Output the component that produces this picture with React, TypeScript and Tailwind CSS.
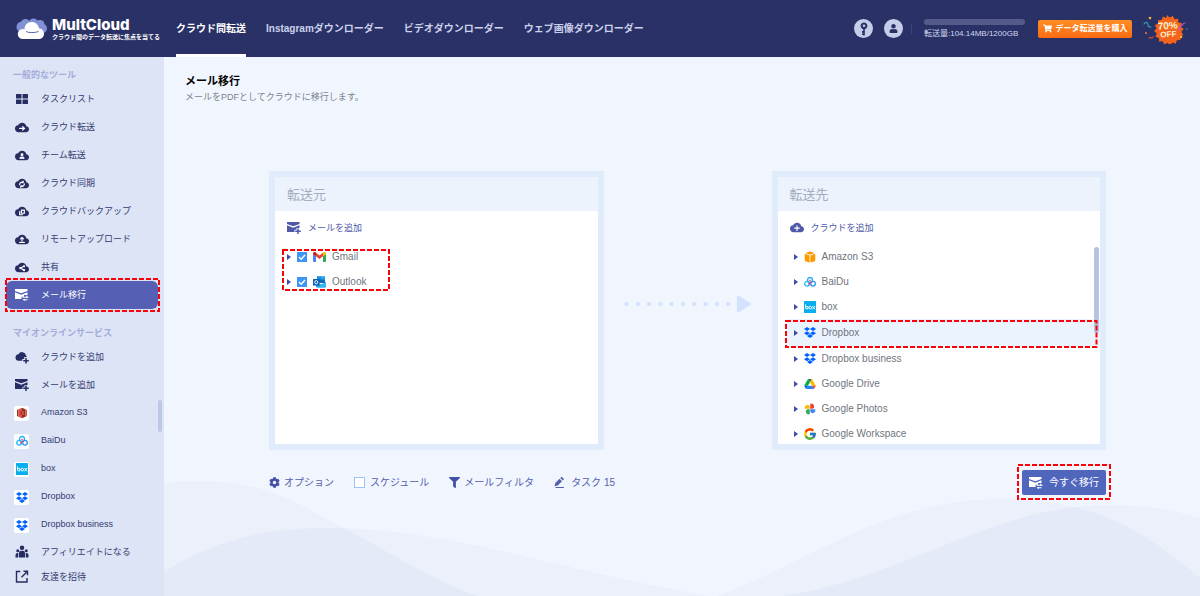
import type { ReactNode } from "react";
import clsx from "clsx";
import { FaCog, FaFilter, FaShoppingCart, FaUser } from "react-icons/fa";
import { FcGoogle } from "react-icons/fc";

const CLOUD_PATH =
    "M19.35 10.04A7.49 7.49 0 0 0 12 4C9.11 4 6.6 5.64 5.35 8.04A5.994 5.994 0 0 0 0 14c0 3.31 2.69 6 6 6h13c2.76 0 5-2.24 5-5 0-2.64-2.05-4.78-4.65-4.96z";

function CloudIcon({ children }: { children?: ReactNode }) {
    return (
        <svg viewBox="0 3 24 18" className="h-[11px] w-3.5" aria-hidden="true">
            <path d={CLOUD_PATH} fill="currentColor" />
            <g fill="none" stroke="#fff" strokeWidth="2" strokeLinecap="round" strokeLinejoin="round">
                {children}
            </g>
        </svg>
    );
}

function CloudPlusIcon() {
    return (
        <svg viewBox="0 0 28 26" className="h-[13px] w-3.5" aria-hidden="true">
            <path
                d="M22 9A8 8 0 0 0 7 6.600 6.500 6.500 0 0 0 6.500 19.500h8v-3.500h4v-4H24z"
                fill="currentColor"
            />
            <path d="M22 14v11M16.500 19.500h11" stroke="currentColor" strokeWidth="3" />
        </svg>
    );
}

function MailPlusIcon() {
    return (
        <svg viewBox="0 0 28 24" className="h-3 w-3.5" aria-hidden="true">
            <path d="M0 0h25v4L12.500 8.500 0 4z" fill="currentColor" />
            <path d="M0 6.500l12.500 5 12.500-5V12h-6v3.500h-4V20H0z" fill="currentColor" />
            <path d="M22 13v11M16.500 18.500h11" stroke="currentColor" strokeWidth="3" />
        </svg>
    );
}

function MailMoveIcon() {
    return (
        <svg viewBox="0 0 28 24" className="h-3 w-3.5" aria-hidden="true">
            <path d="M0 0h25v4L12.500 8.500 0 4z" fill="currentColor" />
            <path d="M0 6.500l12.500 5 12.500-5V12h-7v3.500h-5V20H0z" fill="currentColor" />
            <path d="M15 16.500h9M17 21.500h8" stroke="currentColor" strokeWidth="2.200" />
            <path d="M22.500 12.500l5.500 5h-5.500zM19.500 24.500v-4H15z" fill="currentColor" />
        </svg>
    );
}

function TeamIcon() {
    return (
        <svg viewBox="0 0 28 26" className="h-[13px] w-3.5" fill="currentColor" aria-hidden="true">
            <circle cx="14" cy="5.500" r="4.500" />
            <circle cx="5.500" cy="11.500" r="3" />
            <circle cx="22.500" cy="11.500" r="3" />
            <path d="M8 25V16a4.500 4.500 0 0 1 4.500-4.500h3A4.500 4.500 0 0 1 20 16v9z" />
            <path d="M1 25v-5a4 4 0 0 1 4-4h1.500v9zM27 25v-5a4 4 0 0 0-4-4h-1.500v9z" />
        </svg>
    );
}

function InviteIcon() {
    return (
        <svg viewBox="0 0 26 26" className="h-[13px] w-3.5" fill="none" stroke="currentColor" strokeWidth="2.800" aria-hidden="true">
            <path d="M9.500 3H2v21h21v-8" />
            <path d="M16 2.500h8v8M24 2.500l-12 12" />
        </svg>
    );
}

function GridIcon() {
    return (
        <svg viewBox="0 0 24 20" className="h-2.5 w-3" fill="currentColor" aria-hidden="true">
            <rect width="11" height="9" rx="1" />
            <rect x="13" width="11" height="9" rx="1" />
            <rect y="11" width="11" height="9" rx="1" />
            <rect x="13" y="11" width="11" height="9" rx="1" />
        </svg>
    );
}

function PencilIcon() {
    return (
        <svg viewBox="0 0 22 22" className="size-[11px]" fill="currentColor" aria-hidden="true">
            <path d="M1 18.500l1.500-6.500L11 3.500l5 5-8.500 8.500zM12.500 2l1.500-1.300c.8-.7 1.700-.7 2.500 0L19 3.200c.8.800.8 1.700 0 2.500L17.500 7z" />
            <path d="M3 20h17v2H3z" />
        </svg>
    );
}

function S3RedLogo() {
    return (
        <svg viewBox="0 0 24 24" className="size-3" aria-hidden="true">
            <path d="M2 6l3-1.500v15L2 18z" fill="#8c3123" />
            <path d="M5 4.500l7-3v21l-7-3z" fill="#e05243" />
            <path d="M19 4.500l-7-3v21l7-3z" fill="#8c3123" />
            <path d="M22 6l-3-1.500v15l3-1.500z" fill="#e05243" />
            <path d="M8.500 8l3.500 1v6l-3.500 1z" fill="#b0392c" />
            <path d="M15.500 8L12 9v6l3.500 1z" fill="#e05243" />
        </svg>
    );
}

function S3BoxLogo() {
    return (
        <svg viewBox="0 0 24 24" className="size-3" aria-hidden="true">
            <path d="M12 1l9.500 3L12 7.500 2.500 4z" fill="#ff9900" />
            <path d="M1.500 5.500L11.200 9v14L4 21c-1.700-.6-2.500-1.500-2.500-3zM22.500 5.500L12.800 9v14L20 21c1.700-.6 2.500-1.500 2.500-3z" fill="#ff9900" />
        </svg>
    );
}

function BaiduLogo() {
    return (
        <svg viewBox="0 0 24 24" className="size-3" fill="none" strokeWidth="2.600" aria-hidden="true">
            <circle cx="12" cy="8" r="5" stroke="#2ab0fb" />
            <circle cx="6" cy="15.500" r="4.600" stroke="#19b5fe" />
            <circle cx="18" cy="15.500" r="4.600" stroke="#2196f3" />
            <path d="M9 17l5.500-5.500" stroke="#f5405a" />
            <circle cx="12" cy="9" r="1.600" fill="#f5405a" />
        </svg>
    );
}

function BoxLogo() {
    return (
        <svg viewBox="0 0 24 24" className="size-3" aria-hidden="true">
            <rect width="24" height="24" rx="1" fill="#06aeef" />
            <g fill="none" stroke="#fff" strokeWidth="1.900" strokeLinecap="round">
                <path d="M3 7.500v6" />
                <circle cx="5.800" cy="13.300" r="2.700" />
                <circle cx="12.500" cy="13.300" r="2.700" />
                <path d="M17.500 10.600l4 5.400M21.500 10.600l-4 5.400" />
            </g>
        </svg>
    );
}

function DropboxLogo() {
    return (
        <svg viewBox="0 0 24 22" className="h-[11px] w-3" fill="#0061ff" aria-hidden="true">
            <path d="M6 0l6 4-6 4-6-4zM18 0l6 4-6 4-6-4zM6 8.500l6 4-6 4-6-4zM18 8.500l6 4-6 4-6-4z" />
            <path d="M6 18l6-4 6 4-6 4z" />
        </svg>
    );
}

function DriveLogo() {
    return (
        <svg viewBox="0 0 24 22" className="size-3" aria-hidden="true">
            <path d="M8.200 1h7.600L12 7.700z" fill="#188038" />
            <path d="M8.200 1L12 7.700 7.800 14.500H.3z" fill="#00ac47" />
            <path d="M15.800 1L12 7.700l4.200 6.800h7.500z" fill="#ffba00" />
            <path d="M7.800 14.500h8.400l3.800 6.500H4z" fill="#2684fc" />
            <path d="M.3 14.500h7.500L4 21z" fill="#0066da" />
            <path d="M23.700 14.500h-7.500L20 21z" fill="#ea4335" />
        </svg>
    );
}

function PhotosLogo() {
    return (
        <svg viewBox="0 0 24 24" className="size-3" aria-hidden="true">
            <path d="M12.500 2v9.500h4.700A4.700 4.700 0 0 0 12.500 2z" fill="#ea4335" />
            <path d="M22 12.500h-9.500v4.700a4.700 4.700 0 0 0 9.500-4.700z" fill="#4285f4" />
            <path d="M11.500 22v-9.500H6.800a4.700 4.700 0 0 0 4.700 9.500z" fill="#34a853" />
            <path d="M2 11.500h9.500V6.800A4.700 4.700 0 0 0 2 11.500z" fill="#fbbc04" />
        </svg>
    );
}

function GmailLogo() {
    return (
        <svg viewBox="0 0 26 20" className="h-2.5 w-[13px]" aria-hidden="true">
            <path d="M0 4l6 4v12H2a2 2 0 0 1-2-2z" fill="#4285f4" />
            <path d="M26 4l-6 4v12h4a2 2 0 0 0 2-2z" fill="#34a853" />
            <path d="M6 1.500l7 5.500 7-5.500V8.500L13 14 6 8.500z" fill="#ea4335" />
            <path d="M0 3c0-2.500 3-4 5-2.300l1 .8v7L0 4.500z" fill="#c5221f" />
            <path d="M26 3c0-2.500-3-4-5-2.300l-1 .8v7l6-4z" fill="#fbbc04" />
        </svg>
    );
}

function OutlookLogo() {
    return (
        <svg viewBox="0 0 26 24" className="h-3 w-[13px]" aria-hidden="true">
            <path d="M8 1h16v13H8z" fill="#0f6cbd" />
            <path d="M8 1h8v6H8z" fill="#1490df" />
            <path d="M16 1h8v6h-8z" fill="#28a8ea" />
            <path d="M6 12l10 5 10-5v9a2 2 0 0 1-2 2H8a2 2 0 0 1-2-2z" fill="#1aa0e8" />
            <path d="M26 12v9a2 2 0 0 1-2 2H9z" fill="#35b8f1" />
            <rect y="6" width="13" height="13" rx="1" fill="#0a5eb0" />
            <ellipse cx="6.500" cy="12.500" rx="3" ry="3.300" fill="none" stroke="#fff" strokeWidth="2" />
        </svg>
    );
}

// Red dashed frame around the nearest relative parent
function Highlight({ className }: { className: string }) {
    return (
        <svg className={clsx("pointer-events-none absolute z-10 overflow-visible", className)} aria-hidden="true">
            <rect width="100%" height="100%" fill="none" stroke="#fb0007" strokeWidth="2" strokeDasharray="5 2" />
        </svg>
    );
}

function Caret() {
    return (
        <button type="button" aria-label="展開" className="flex w-2.5 shrink-0 items-center">
            <svg viewBox="0 0 4 6" className="h-1.5 w-1 fill-[#3f4aa8]">
                <path d="M0 0l4 3-4 3z" />
            </svg>
        </button>
    );
}

const tools = [
    { label: "タスクリスト", icon: <GridIcon /> },
    { label: "クラウド転送", icon: <CloudIcon><path d="M8 13.500h8M13 10.500l3.500 3-3.500 3" /></CloudIcon> },
    {
        label: "チーム転送",
        icon: <CloudIcon><circle cx="12" cy="10.500" r="1.500" fill="#fff" /><path d="M8.500 16.500c1-2.500 6-2.500 7 0z" fill="#fff" /></CloudIcon>,
    },
    { label: "クラウド同期", icon: <CloudIcon><path d="M8 14a4 4 0 0 1 6-4M16 12.500a4 4 0 0 1-6 4M14 8v2.500h-2M10 18.500V16h2" /></CloudIcon> },
    { label: "クラウドバックアップ", icon: <CloudIcon><path d="M8 12v5.500h5M11 9.500h5V15h-5z" /></CloudIcon> },
    { label: "リモートアップロード", icon: <CloudIcon><path d="M12 14V9M9.500 11L12 8.500l2.500 2.500M8 17h8" /></CloudIcon> },
    { label: "共有", icon: <CloudIcon><path d="M15.500 10L9 13l6.500 3.500" /><circle cx="15.500" cy="10" r=".8" /><circle cx="9" cy="13" r=".8" /><circle cx="15.500" cy="16.500" r=".8" /></CloudIcon> },
    { label: "メール移行", icon: <MailMoveIcon />, active: true },
];

const services = [
    { label: "Amazon S3", icon: <S3RedLogo /> },
    { label: "BaiDu", icon: <BaiduLogo /> },
    { label: "box", icon: <BoxLogo /> },
    { label: "Dropbox", icon: <DropboxLogo /> },
    { label: "Dropbox business", icon: <DropboxLogo /> },
];

const targets = [
    { label: "Amazon S3", icon: <S3BoxLogo /> },
    { label: "BaiDu", icon: <BaiduLogo /> },
    { label: "box", icon: <BoxLogo /> },
    { label: "Dropbox", icon: <DropboxLogo />, selected: true },
    { label: "Dropbox business", icon: <DropboxLogo /> },
    { label: "Google Drive", icon: <DriveLogo /> },
    { label: "Google Photos", icon: <PhotosLogo /> },
    { label: "Google Workspace", icon: <FcGoogle className="size-3.5 shrink-0" aria-hidden="true" /> },
];

const sources = [
    { label: "Gmail", icon: <GmailLogo /> },
    { label: "Outlook", icon: <OutlookLogo /> },
];

function SideLink({ label, icon, active, tile, short }: { label: string; icon: ReactNode; active?: boolean; tile?: boolean; short?: boolean }) {
    return (
        <li className="relative">
            <a
                href="#"
                className={clsx(
                    "mx-1.5 flex items-center gap-3 rounded-md pl-2",
                    short ? "h-[25px]" : "h-7",
                    active ? "bg-[#5560b4] text-white" : "text-[#343b70]"
                )}
            >
                <span className={clsx("flex size-[15px] shrink-0 items-center justify-center", tile ? "rounded-xs bg-white" : !active && "text-[#262d62]")}>
                    {icon}
                </span>
                <span className={clsx(!tile && "pt-0.5")}>{label}</span>
            </a>
            {active && <Highlight className="-top-0.5 left-1.5 h-8 w-[153px]" />}
        </li>
    );
}

function Header() {
    return (
        <header className="flex h-[57px] shrink-0 items-center bg-[#2a3166] text-[10px] font-bold text-[#ccd2ec]">
            <a href="#" className="flex w-44 shrink-0 items-center gap-1 pl-4 whitespace-nowrap text-white">
                <svg viewBox="0 0 64 44" className="h-[22px] w-8 shrink-0" aria-hidden="true">
                    <g fill="#8291d6">
                        <circle cx="12" cy="18" r="11" />
                        <circle cx="19" cy="11" r="9" />
                        <circle cx="35" cy="11" r="10" />
                        <circle cx="48" cy="13" r="9" />
                        <circle cx="53" cy="21" r="9" />
                    </g>
                    <path
                        d="M14 42a10 10 0 0 1-1-20c2 0 3 0 4 1 0-9 6-15 14-15s14 5 15 13c6 0 10 5 10 10.500S52 42 46 42z"
                        fill="#fff"
                    />
                    <path d="M20 27c5 3 18 3 25 0" fill="none" stroke="#5966ab" strokeWidth="2" />
                </svg>
                <span className="flex flex-col">
                    <span className="font-['Inter',sans-serif] text-[15px] leading-4 font-extrabold">MultCloud</span>
                    <span className="text-[6px] leading-2">クラウド間のデータ転送に焦点を当てる</span>
                </span>
            </a>
            <nav className="flex h-full gap-5 whitespace-nowrap">
                <a href="#" className="flex items-center border-y-3 border-t-transparent border-b-white text-white">クラウド間転送</a>
                <a href="#" className="flex items-center">Instagramダウンローダー</a>
                <a href="#" className="flex items-center">ビデオダウンローダー</a>
                <a href="#" className="flex items-center">ウェブ画像ダウンローダー</a>
            </nav>
            <div className="ml-auto flex items-center pr-3 font-normal whitespace-nowrap">
                <button type="button" aria-label="キー" className="flex size-[19px] items-center justify-center rounded-full bg-[#c5cde8] text-[#2a3166]">
                    <svg viewBox="0 0 16 24" className="h-3.5 w-2.5" fill="none" stroke="currentColor" aria-hidden="true">
                        <circle cx="8" cy="6.500" r="4" strokeWidth="3.600" />
                        <path d="M8 10v13M8 17h-3.500M8 21h-3.500" strokeWidth="2.800" />
                    </svg>
                </button>
                <button type="button" aria-label="アカウント" className="ml-[11px] flex size-[19px] items-center justify-center rounded-full bg-[#c5cde8] text-[#2a3166]">
                    <FaUser className="size-[9px]" />
                </button>
                <span className="mr-3 ml-2 h-2.5 w-px bg-[#3d4479]" />
                <div className="w-[101px]">
                    <div className="h-1.5 rounded-full bg-[#555b88]" />
                    <p className="mt-1 h-2.5 text-[8px] leading-2.5 text-[#d3d9ef]">転送量:104.14MB/1200GB</p>
                </div>
                <button
                    type="button"
                    className="ml-[13px] flex h-[18px] w-[94px] items-center justify-center gap-1 rounded-xs bg-linear-to-b from-[#ff8d24] to-[#fa6a12] text-[8px] font-bold text-white"
                >
                    <FaShoppingCart className="size-[9px]" aria-hidden="true" />
                    データ転送量を購入
                </button>
                <a href="#" className="ml-2.5" aria-label="70% OFF">
                    <svg viewBox="0 0 46 30" className="h-[30px] w-[46px]">
                        <path
                            d="M25 1l2.600 2.600L31 2l1.500 3.300 3.600-.6.200 3.700 3.600.9-1.200 3.400 3 2.300-2.400 2.700 1.900 3.200-3.300 1.500.5 3.600-3.600.2-1 3.600-3.500-1.300-2.300 2.900-2.600-2.600-3.200 1.800-1.400-3.400-3.700.4-.1-3.700-3.500-1.100 1.400-3.400-2.800-2.400 2.500-2.600-1.700-3.300 3.400-1.300-.3-3.600 3.600-.1 1.200-3.500 3.400 1.500z"
                            fill="#f5641b"
                        />
                        <g fill="none" strokeWidth="1.200" strokeLinecap="round">
                            <path d="M2 10c2-3 4-1 4 1s2 2 3 2" stroke="#2f9ab5" />
                            <path d="M43 9c-3 0-2 3-4 3s-1 4-3 4" stroke="#c055c8" />
                            <path d="M7 24c1-1 2 1 4-1" stroke="#e04b2d" />
                        </g>
                        <circle cx="8" cy="4" r="1.300" fill="#ffb02e" />
                        <circle cx="4" cy="19" r="1" fill="#ef7a28" />
                        <circle cx="39" cy="23" r="1.300" fill="#ffb02e" />
                        <circle cx="45" cy="15" r=".8" fill="#2f9ab5" />
                        <g fill="#fff4cf" textAnchor="middle" className="font-bold" transform="rotate(-4 26 15)">
                            <text x="26" y="15" className="text-[10px]">70%</text>
                            <text x="26" y="23" className="text-[8px]">OFF</text>
                        </g>
                    </svg>
                </a>
            </div>
        </header>
    );
}

function Sidebar() {
    return (
        <aside className="relative w-[164px] shrink-0 bg-[#dde4f6] pt-2 text-[9px] whitespace-nowrap">
            <h2 className="flex h-5 items-center pt-0.5 pl-[13px] font-bold text-[#a4acd8]">一般的なツール</h2>
            <ul>
                {tools.map((item) => <SideLink key={item.label} {...item} />)}
            </ul>
            <h2 className="mt-3.5 flex h-5 items-center pt-0.5 pl-[13px] font-bold text-[#a4acd8]">マイオンラインサービス</h2>
            <ul>
                <SideLink label="クラウドを追加" icon={<CloudPlusIcon />} />
                <SideLink label="メールを追加" icon={<MailPlusIcon />} />
                {services.map((item) => <SideLink key={item.label} {...item} tile />)}
            </ul>
            <ul>
                <SideLink label="アフィリエイトになる" icon={<TeamIcon />} short />
                <SideLink label="友達を招待" icon={<InviteIcon />} short />
            </ul>
            <div className="absolute top-[343px] right-0.5 h-8 w-1 rounded-full bg-[#bdc8e4]" />
        </aside>
    );
}

function Panel({ title, children }: { title: string; children: ReactNode }) {
    return (
        <section className="min-w-0 flex-1 border-6 border-[#e0ebfb] bg-white">
            <h2 className="flex h-[34px] items-center bg-[#ecf3fc] pt-0.5 pl-3 text-[13px] text-[#a3adc0]">{title}</h2>
            <div className="relative h-[233px] overflow-hidden text-[10px] text-[#6f757e]">{children}</div>
        </section>
    );
}

function Waves() {
    return (
        <svg viewBox="0 0 1036 116" preserveAspectRatio="none" className="absolute bottom-0 left-0 h-[116px] w-full fill-[#6070b8]/4" aria-hidden="true">
            <path d="M0 3C90-8 130 22 178 47 230 74 270 102 314 116H0z" />
            <path d="M0 92C50 60 100 48 162 48 290 48 390 90 546 116H0z" />
            <path d="M553 116C650 80 720 19 838 19 930 19 980 50 1036 98V116z" />
            <path d="M619 116C740 98 830 25 944 25c40 0 65 5 92 13v78z" />
        </svg>
    );
}

export default function App() {
    return (
        <div className="flex min-h-screen flex-col font-['Liberation_Sans','Noto_Sans_CJK_JP',sans-serif]" lang="ja">
            <Header />
            <div className="flex flex-1">
                <Sidebar />
                <main className="relative flex-1 bg-[#f1f6fe]">
                    <Waves />
                    <div className="relative pt-4 pl-[21px]">
                        <h1 className="text-[11px] leading-4 font-bold text-black">メール移行</h1>
                        <p className="text-[9px] leading-4 text-[#7b828c]">メールをPDFとしてクラウドに移行します。</p>
                    </div>
                    <div className="relative mt-[66px] pr-[94px] pl-[105px]">
                        <div className="flex items-center">
                            <Panel title="転送元">
                                <button type="button" className="flex h-[33px] items-center gap-[7px] pl-3 text-[9px] text-[#4f59a8]">
                                    <MailPlusIcon />
                                    <span className="pt-0.5">メールを追加</span>
                                </button>
                                <ul className="relative w-[115px]">
                                    {sources.map((item) => (
                                        <li key={item.label} className="flex h-[25px] items-center pl-3">
                                            <Caret />
                                            <label className="flex items-center">
                                                <span className="relative mr-1.5 size-2.5">
                                                    <input type="checkbox" defaultChecked className="peer block size-2.5 appearance-none border border-[#3b96f5] checked:bg-[#3b96f5]" />
                                                    <svg viewBox="0 0 10 10" className="pointer-events-none absolute inset-0 hidden peer-checked:block" fill="none" stroke="#fff" strokeWidth="1.500">
                                                        <path d="M2 5l2.200 2.200L8 3" />
                                                    </svg>
                                                </span>
                                                {item.icon}
                                                <span className="ml-1.5">{item.label}</span>
                                            </label>
                                        </li>
                                    ))}
                                    <Highlight className="top-1.5 left-2 h-10 w-[106px]" />
                                </ul>
                            </Panel>
                            <svg viewBox="0 0 128 18" className="mx-5 mb-3.5 h-[18px] w-32 shrink-0 fill-[#d4e2fd]" aria-hidden="true">
                                {[0, 1, 2, 3, 4, 5, 6, 7, 8, 9].map((i) => <circle key={i} cx={2.500 + i * 11.300} cy="9" r="2.200" />)}
                                <path d="M113 1.500c0-1 1-1.300 1.800-.8l11.700 7.200c.8.500.8 1.700 0 2.200l-11.700 7.200c-.8.500-1.800.2-1.800-.8z" />
                            </svg>
                            <Panel title="転送先">
                                <button type="button" className="flex h-[33px] items-center gap-[7px] pl-3 text-[9px] text-[#4f59a8]">
                                    <CloudIcon><path d="M12 9v8M8 13h8" /></CloudIcon>
                                    <span className="pt-0.5">クラウドを追加</span>
                                </button>
                                <ul>
                                    {targets.map((item) => (
                                        <li key={item.label} className={clsx("relative ml-2 flex items-center pl-2", item.selected ? "h-[27px] bg-[#ebf3fe]" : "h-[25px]")}>
                                            <Caret />
                                            <span className="flex w-3 shrink-0 items-center justify-center">{item.icon}</span>
                                            <span className="ml-1.5">{item.label}</span>
                                            {item.selected && <Highlight className="top-0.5 left-0 h-[26px] w-[calc(100%-4px)]" />}
                                        </li>
                                    ))}
                                </ul>
                                <div className="absolute top-9 right-px h-[86px] w-[5px] rounded-full bg-[#b5c2e2]" />
                            </Panel>
                        </div>
                        <div className="mt-5 flex items-center gap-5 text-[10px] whitespace-nowrap text-[#5560ae]">
                            <button type="button" className="flex items-center gap-1">
                                <FaCog className="size-[11px] text-[#4450a6]" aria-hidden="true" />
                                オプション
                            </button>
                            <label className="flex items-center gap-[5px]">
                                <input type="checkbox" className="size-[11px] appearance-none border border-[#9cc3fb] bg-white checked:bg-[#3b96f5]" />
                                スケジュール
                            </label>
                            <button type="button" className="flex items-center gap-1">
                                <FaFilter className="size-[11px] text-[#4450a6]" aria-hidden="true" />
                                メールフィルタ
                            </button>
                            <button type="button" className="flex items-center gap-1.5">
                                <PencilIcon />
                                タスク 15
                            </button>
                            <div className="relative ml-auto">
                                <button type="button" className="flex h-[25px] w-[84px] items-center justify-center gap-1.5 rounded-xs bg-[#5066bd] text-white">
                                    <MailMoveIcon />
                                    今すぐ移行
                                </button>
                                <Highlight className="-top-[5px] -left-1 h-[34px] w-[92px]" />
                            </div>
                        </div>
                    </div>
                </main>
            </div>
        </div>
    );
}
